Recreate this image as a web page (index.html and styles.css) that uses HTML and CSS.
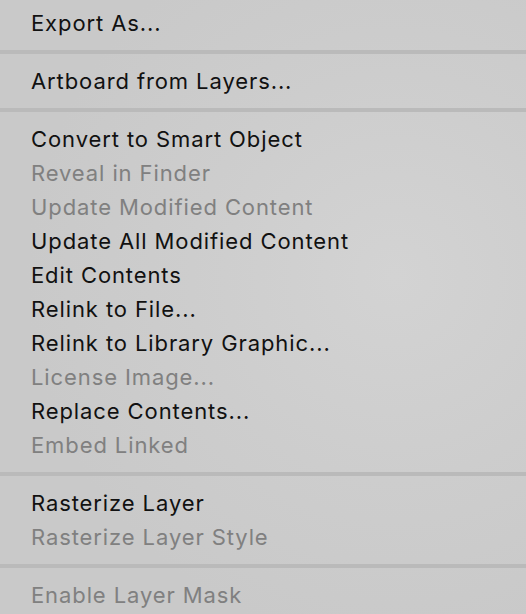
FILE: index.html
```html
<!DOCTYPE html>
<html>
<head>
<meta charset="utf-8">
<link rel="stylesheet" href="styles.css">
</head>
<body>
<ul class="menu">
  <li class="item partial">Quick Export as PNG</li>
  <li class="item">Export As...</li>
  <li class="sep"></li>
  <li class="item">Artboard from Layers...</li>
  <li class="sep"></li>
  <li class="item">Convert to Smart Object</li>
  <li class="item disabled">Reveal in Finder</li>
  <li class="item disabled">Update Modified Content</li>
  <li class="item">Update All Modified Content</li>
  <li class="item">Edit Contents</li>
  <li class="item">Relink to File...</li>
  <li class="item">Relink to Library Graphic...</li>
  <li class="item disabled">License Image...</li>
  <li class="item">Replace Contents...</li>
  <li class="item disabled">Embed Linked</li>
  <li class="sep"></li>
  <li class="item">Rasterize Layer</li>
  <li class="item disabled">Rasterize Layer Style</li>
  <li class="sep"></li>
  <li class="item disabled">Enable Layer Mask</li>
</ul>
</body>
</html>
```

FILE: styles.css
```css
html, body {
  margin: 0;
  padding: 0;
  height: 100%;
  overflow: hidden;
}
body {
  background: radial-gradient(ellipse 70% 60% at 75% 45%, #d3d3d3 0%, #cdcdcd 55%, #c9c9c9 100%);
  font-family: Inter, "Liberation Sans", Arial, sans-serif;
}
.menu {
  list-style: none;
  margin: -28px 0 0 0;
  padding: 0;
}
.item {
  height: 34px;
  line-height: 34px;
  font-size: 22px;
  letter-spacing: 0.9px;
  padding-left: 31px;
  color: #111111;
  white-space: nowrap;
}
.item.partial {
  line-height: 27px;
}
.item.disabled {
  color: #808080;
}
.sep {
  height: 4px;
  margin: 10px 0;
  background: #bababa;
}
```
